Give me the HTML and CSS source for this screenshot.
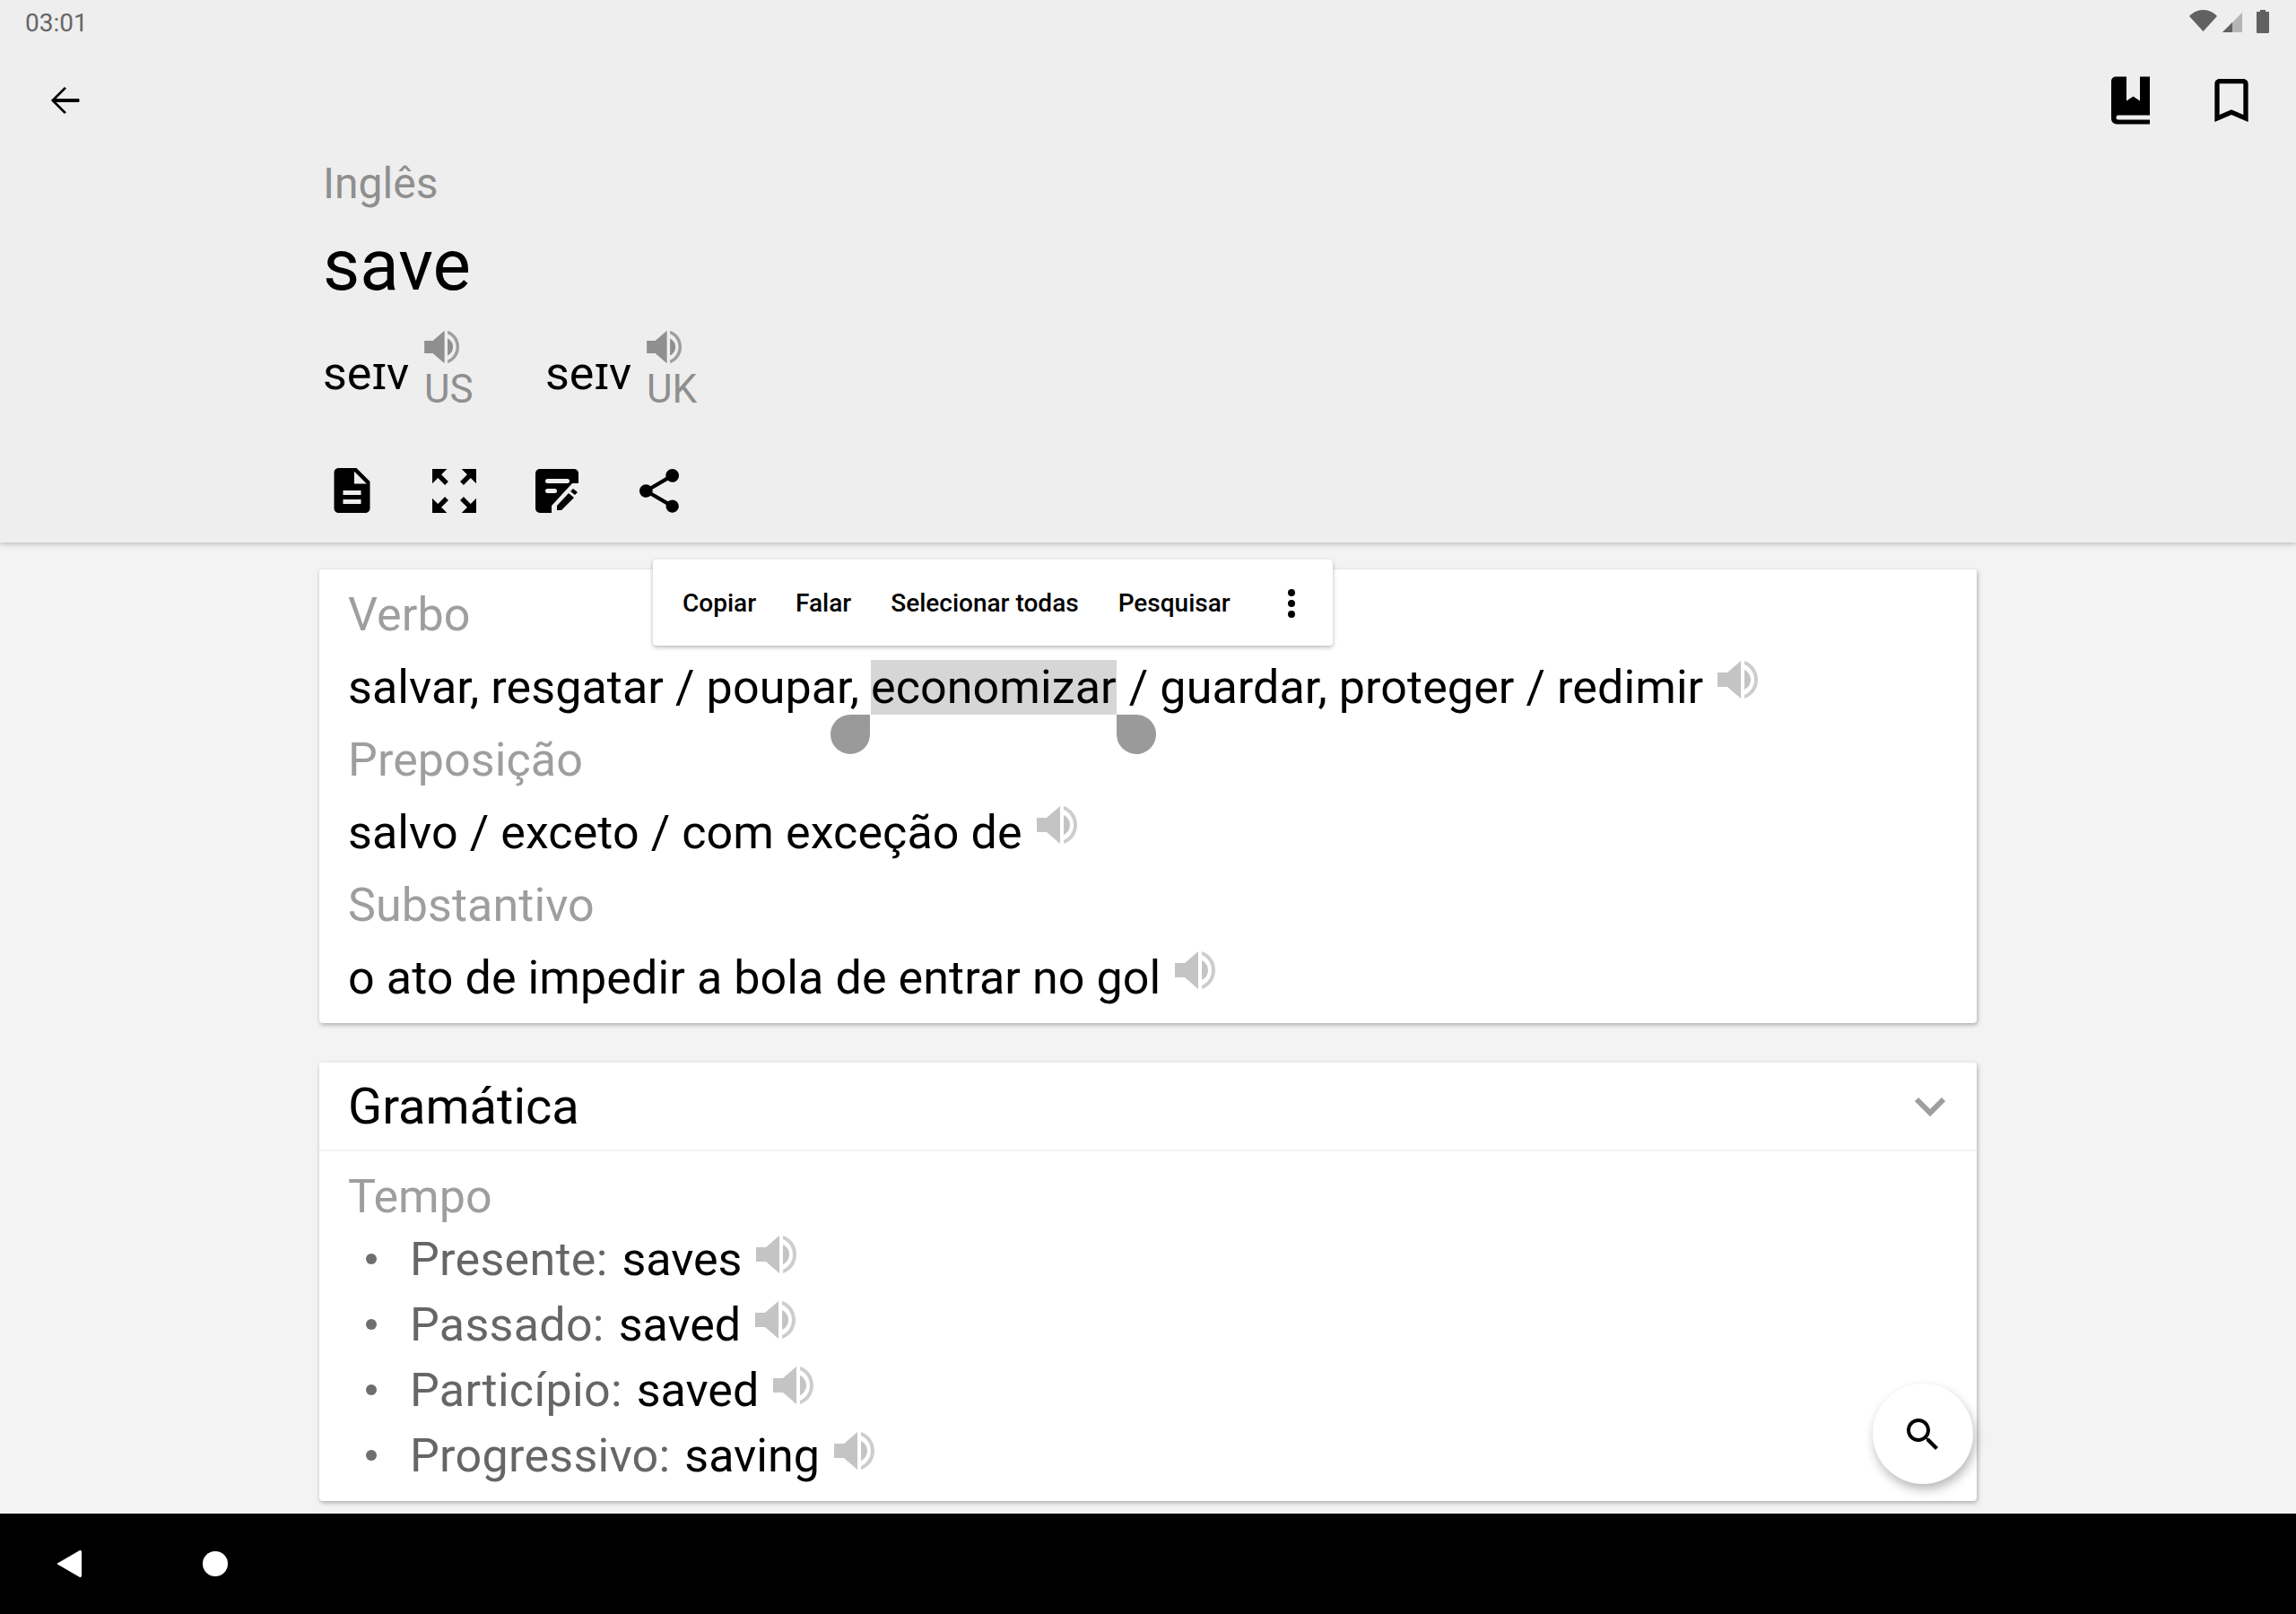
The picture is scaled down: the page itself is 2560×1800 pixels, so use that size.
FILE: index.html
```html
<!DOCTYPE html>
<html lang="pt-BR">
<head>
    <meta charset="UTF-8">
    <meta name="viewport" content="width=device-width, initial-scale=1.0">
    <title>save - Inglês</title>
    <link rel="stylesheet" href="styles.css">
</head>
<body>
<svg class="defs" width="0" height="0">
    <symbol id="speaker" viewBox="0 0 46 44">
        <path d="M0 14h11L26 1v42L11 30H0z"/>
        <path d="M30 11c4 2 7 6 7 11s-3 9-7 11z"/>
        <path d="M30 1c9 3 15 11 15 21s-6 18-15 21v-4c7-3 11-10 11-17S37 8 30 5z" opacity=".85"/>
    </symbol>
</svg>
<div class="app">
    <div class="top">
        <div class="statusbar">
            <span class="time">03:01</span>
            <div class="status-icons">
                <svg class="i-wifi" viewBox="0 0 31 24"><path d="M0 7C4 3 9 0 15.500 0S27 3 31 7L15.500 24z" fill="#616161"/></svg>
                <svg class="i-signal" viewBox="0 0 22 22"><path d="M22 0v22H0z" fill="#b5b5b5"/><path d="M11 11v11H0z" fill="#616161"/></svg>
                <svg class="i-battery" viewBox="0 0 14 26"><path d="M4 0h6v2h3a1 1 0 0 1 1 1v22a1 1 0 0 1-1 1H1a1 1 0 0 1-1-1V3a1 1 0 0 1 1-1h3z" fill="#616161"/></svg>
            </div>
        </div>
        <div class="appbar">
            <svg class="i-back" viewBox="0 0 24 24"><path d="M20 11.300H6.800l5.900-5.900-.7-.7L4.700 12l7.300 7.300.7-.7-5.900-5.900H20z" stroke="#000" stroke-width=".5"/></svg>
            <div class="actions">
                <svg class="i-book" viewBox="0 0 43 53"><path d="M5 0h12v27l7.500-5 7.500 5V0h11v43H8a2.500 2.500 0 0 0 0 5h35v5H6a6 6 0 0 1-6-6V5a5 5 0 0 1 5-5z"/></svg>
                <svg class="i-mark" viewBox="5 3 14 18"><path d="M17 3H7c-1.100 0-2 .9-2 2v16l7-3 7 3V5c0-1.100-.9-2-2-2zm0 15l-5-2.180L7 18V5h10v13z"/></svg>
            </div>
        </div>
        <div class="word">
            <div class="lang">Inglês</div>
            <div class="term">save</div>
            <div class="prons">
                <div class="pron">
                    <span class="ipa">seɪv</span>
                    <div class="accent">
                        <svg class="speaker-big"><use href="#speaker"/></svg>
                        <span>US</span>
                    </div>
                </div>
                <div class="pron">
                    <span class="ipa">seɪv</span>
                    <div class="accent">
                        <svg class="speaker-big"><use href="#speaker"/></svg>
                        <span>UK</span>
                    </div>
                </div>
            </div>
            <div class="tools">
                <div class="tool"><svg class="i-doc" viewBox="4 2 16 20"><path d="M14 2H6c-1.100 0-1.990.9-1.990 2L4 20c0 1.100.89 2 1.990 2H18c1.100 0 2-.9 2-2V8l-6-6zm2 16H8v-2h8v2zm0-4H8v-2h8v2zm-3-5V3.500L18.500 9H13z"/></svg></div>
                <div class="tool"><svg class="i-expand" viewBox="3 3 18 18"><path d="M15 3l2.300 2.300-2.890 2.870 1.420 1.420L18.700 6.700 21 9V3h-6zM3 9l2.300-2.300 2.870 2.890 1.420-1.420L6.700 5.300 9 3H3v6zm6 12l-2.300-2.300 2.890-2.870-1.420-1.420L5.300 17.300 3 15v6h6zm12-6l-2.300 2.300-2.870-2.890-1.420 1.420 2.890 2.870L15 21h6v-6z"/></svg></div>
                <div class="tool"><svg class="i-note" viewBox="0 0 48 49">
                    <rect width="48" height="49" rx="5"/>
                    <rect x="11" y="11" width="27" height="5" rx="2.500" fill="#eee"/>
                    <rect x="11" y="22" width="13" height="5" rx="2.500" fill="#eee"/>
                    <path d="M18 49v-8L41 16h7v33z" fill="#eee"/>
                    <path d="M24 46v-5l13-14 6 5-14 14z"/>
                    <path d="M39 25l3-3 5 4-3 3z"/>
                </svg></div>
                <div class="tool"><svg class="i-share" viewBox="3 2 18 20"><path d="M18 16.080c-.76 0-1.440.3-1.960.77L8.910 12.700c.05-.23.09-.46.09-.7s-.04-.47-.09-.7l7.050-4.110c.54.5 1.250.81 2.040.81 1.660 0 3-1.340 3-3s-1.340-3-3-3-3 1.340-3 3c0 .24.04.47.09.7L8.040 9.810C7.500 9.310 6.790 9 6 9c-1.660 0-3 1.340-3 3s1.340 3 3 3c.79 0 1.500-.31 2.040-.81l7.120 4.160c-.05.21-.08.43-.08.65 0 1.610 1.310 2.920 2.920 2.920 1.610 0 2.920-1.310 2.920-2.920s-1.310-2.920-2.920-2.920z"/></svg></div>
            </div>
        </div>
    </div>

    <div class="content">
        <div class="card meanings">
            <div class="pos">Verbo</div>
            <div class="line">salvar, resgatar / poupar, <span class="sel">economizar<i class="handle left"></i><i class="handle right"></i></span> / guardar, proteger / redimir <svg class="speaker"><use href="#speaker"/></svg></div>
            <div class="pos">Preposição</div>
            <div class="line">salvo / exceto / com exceção de <svg class="speaker"><use href="#speaker"/></svg></div>
            <div class="pos">Substantivo</div>
            <div class="line">o ato de impedir a bola de entrar no gol <svg class="speaker"><use href="#speaker"/></svg></div>
        </div>

        <div class="card grammar">
            <div class="grammar-head">
                <span>Gramática</span>
                <svg class="i-chevron" viewBox="0 0 34 22"><path d="M2 3l15 15L32 3" fill="none" stroke="#9e9e9e" stroke-width="6"/></svg>
            </div>
            <div class="grammar-body">
                <div class="pos">Tempo</div>
                <ul class="tenses">
                    <li><span class="tense">Presente:</span> saves <svg class="speaker"><use href="#speaker"/></svg></li>
                    <li><span class="tense">Passado:</span> saved <svg class="speaker"><use href="#speaker"/></svg></li>
                    <li><span class="tense">Particípio:</span> saved <svg class="speaker"><use href="#speaker"/></svg></li>
                    <li><span class="tense">Progressivo:</span> saving <svg class="speaker"><use href="#speaker"/></svg></li>
                </ul>
            </div>
        </div>

        <!-- menu de selecao de texto -->
        <div class="textmenu">
            <span>Copiar</span>
            <span>Falar</span>
            <span>Selecionar todas</span>
            <span>Pesquisar</span>
            <svg class="i-more" viewBox="0 0 8 32"><circle cx="4" cy="4" r="4"/><circle cx="4" cy="16" r="4"/><circle cx="4" cy="28" r="4"/></svg>
        </div>

        <div class="fab">
            <svg class="i-search" viewBox="0 0 24 24"><path d="M15.500 14h-.79l-.28-.27C15.410 12.590 16 11.110 16 9.500 16 5.910 13.090 3 9.500 3S3 5.910 3 9.500 5.910 16 9.500 16c1.610 0 3.090-.59 4.230-1.570l.27.28v.79l5 4.990L20.490 19l-4.990-5zm-6 0C7.010 14 5 11.990 5 9.500S7.010 5 9.500 5 14 7.010 14 9.500 11.990 14 9.500 14z"/></svg>
        </div>
    </div>

    <div class="navbar">
        <svg class="i-navback" viewBox="0 0 28 32"><path d="M1 16L26 1.500q1.500-.5 1.500 1v27q0 1.500-1.500 1z" fill="#fff" stroke="#fff" stroke-linejoin="round"/></svg>
        <span class="i-home"></span>
    </div>
</div>
</body>
</html>
```

FILE: styles.css
```css
html, body {
    margin: 0;
    padding: 0;
}

body {
    font-family: Roboto, "Noto Sans", sans-serif;
    background: #f3f3f3;
    color: #000;
    overflow: hidden;
}

.defs {
    display: block;
    height: 0;
}

.app {
    width: 2560px;
    height: 1800px;
    display: flex;
    flex-direction: column;
}

/* cabecalho */
.top {
    height: 605px;
    flex: none;
    background: #eee;
    box-shadow: 0 2px 6px rgba(0, 0, 0, 0.22);
    position: relative;
    z-index: 1;
}

.statusbar {
    height: 48px;
    display: flex;
    justify-content: space-between;
    align-items: center;
    padding: 0 30px 0 28px;
}

.time {
    font-size: 28px;
    color: #666;
    margin-top: 2px;
}

.status-icons {
    display: flex;
    align-items: flex-start;
    height: 26px;
    margin-top: 0;
}

.i-wifi {
    width: 31px;
    height: 24px;
}

.i-signal {
    width: 22px;
    height: 22px;
    margin: 3px 16px 0 6px;
}

.i-battery {
    width: 14px;
    height: 26px;
}

.appbar {
    height: 128px;
    display: flex;
    justify-content: space-between;
    align-items: center;
    padding: 0 53px 0 48px;
}

.i-back {
    width: 48px;
    height: 48px;
}

.actions {
    display: flex;
    align-items: center;
}

.i-book {
    width: 43px;
    height: 54px;
    margin-right: 72px;
}

.i-mark {
    width: 38px;
    height: 48px;
}

.word {
    padding-left: 360px;
}

.lang {
    font-size: 48px;
    line-height: 56px;
    color: #8f8f8f;
    margin-top: 1px;
}

.term {
    font-size: 80px;
    line-height: 126px;
}

.prons {
    display: flex;
    margin-top: 9px;
    height: 90px;
}

.pron {
    width: 248px;
    display: flex;
}

.ipa {
    font-size: 52px;
    line-height: 56px;
    margin-top: 21px;
    width: 113px;
}

.accent {
    display: flex;
    flex-direction: column;
    font-size: 44px;
    line-height: 47px;
    color: #8f8f8f;
}

.speaker-big {
    width: 40px;
    height: 38px;
    fill: #8f8f8f;
    margin-bottom: 5px;
}

.tools {
    display: flex;
    margin: 59px 0 0 -25px;
}

.tool {
    width: 114.5px;
    height: 60px;
    display: flex;
    align-items: center;
    justify-content: center;
}

.i-doc {
    width: 41px;
    height: 50px;
}

.i-expand {
    width: 49px;
    height: 49px;
}

.i-note {
    width: 48px;
    height: 49px;
}

.i-share {
    width: 44px;
    height: 49px;
    margin-right: 1px;
}

/* conteudo */
.content {
    flex: 1;
    position: relative;
    overflow: hidden;
    padding: 30px 356px 0;
}

.card {
    width: 1848px;
    background: #fff;
    border-radius: 4px;
    box-shadow: 1px 2px 5px rgba(0, 0, 0, 0.3);
    box-sizing: border-box;
}

.meanings {
    padding: 10px 32px;
    margin-bottom: 44px;
    letter-spacing: 0.1px;
}

.pos {
    font-size: 52px;
    line-height: 81px;
    color: #9e9e9e;
}

.line {
    font-size: 52px;
    line-height: 81px;
    white-space: nowrap;
}

.speaker {
    width: 46px;
    height: 44px;
    fill: #c4c4c4;
    margin-left: 3px;
    vertical-align: 4px;
}

.sel {
    background: #d6d6d6;
    position: relative;
    margin-right: 1px;
}

.handle {
    position: absolute;
    top: 61px;
    width: 44px;
    height: 44px;
    background: #9a9a9a;
}

.handle.left {
    left: -45px;
    border-radius: 50% 0 50% 50%;
}

.handle.right {
    right: -44px;
    border-radius: 0 50% 50% 50%;
}

.grammar {
    height: 489px;
}

.grammar-head {
    height: 99px;
    box-sizing: border-box;
    border-bottom: 2px solid #f3f3f3;
    padding: 1px 35px 0 32px;
    display: flex;
    justify-content: space-between;
    align-items: center;
    font-size: 56px;
}

.i-chevron {
    width: 34px;
    height: 22px;
}

.grammar-body {
    padding: 17px 32px 0;
}

.grammar-body .pos {
    line-height: 67px;
}

.tenses {
    list-style: none;
    margin: 0;
    padding: 0;
}

.tenses li {
    font-size: 52px;
    line-height: 73px;
    padding-left: 69px;
    position: relative;
    white-space: nowrap;
}

.tenses .speaker {
    vertical-align: 1px;
}

.tenses li::before {
    content: "";
    position: absolute;
    left: 20px;
    top: 30px;
    width: 12px;
    height: 12px;
    border-radius: 50%;
    background: #6e6e6e;
}

.tense {
    color: #666;
    letter-spacing: 0.3px;
    margin-right: 3px;
}

.textmenu {
    position: absolute;
    left: 728px;
    top: 19px;
    width: 758px;
    height: 96px;
    background: #fff;
    border-radius: 4px;
    box-shadow: 0 2px 5px rgba(0, 0, 0, 0.28);
    display: flex;
    align-items: center;
    font-size: 28px;
    font-weight: 500;
    color: #000;
    padding: 1px 0 0 33px;
    box-sizing: border-box;
    gap: 44px;
}

.i-more {
    width: 8px;
    height: 32px;
    margin-left: 20px;
}

.fab {
    position: absolute;
    left: 2088px;
    top: 938px;
    width: 112px;
    height: 112px;
    border-radius: 50%;
    background: #fff;
    box-shadow: 2px 6px 12px rgba(0, 0, 0, 0.28);
    display: flex;
    align-items: center;
    justify-content: center;
}

.i-search {
    width: 48px;
    height: 48px;
    margin-top: 2px;
}

.navbar {
    height: 112px;
    flex: none;
    background: #000;
    display: flex;
    align-items: center;
    padding-left: 63px;
}

.i-navback {
    width: 28px;
    height: 32px;
    margin-right: 135px;
}

.i-home {
    width: 28px;
    height: 28px;
    border-radius: 50%;
    background: #fff;
}
```
